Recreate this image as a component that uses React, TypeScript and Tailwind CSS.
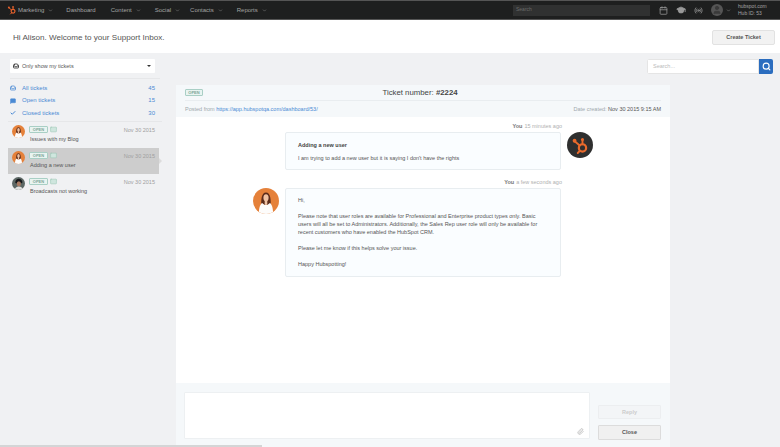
import { ChevronDown, Search, Inbox, MessageSquare, Check, Mail, GraduationCap, Radio, Calendar, Paperclip, User } from "lucide-react";

const FONT = "font-['Liberation_Sans',Arial,sans-serif]";
const NAV = [
  { label: "Dashboard", gap: "ml-[13px]" },
  { label: "Content", gap: "ml-[15px]" },
  { label: "Social", gap: "ml-[14px]" },
  { label: "Contacts", gap: "ml-[10px]" },
  { label: "Reports", gap: "ml-[14px]" },
];

function Sprocket({ size, color }: { size: number; color: string }) {
  return (
    <svg width={size} height={size} viewBox="0 0 24 24" fill="none" stroke={color}>
      <circle cx="14.5" cy="15" r="4.6" strokeWidth="2.8" />
      <path d="M14.5 10.5V5M11 12L5 7M11 19l-2.5 2.5" strokeWidth="2.4" strokeLinecap="round" />
      <circle cx="14.5" cy="4.5" r="1.9" fill={color} stroke="none" />
      <circle cx="4.5" cy="6" r="2.4" fill={color} stroke="none" />
    </svg>
  );
}

function Woman({ size }: { size: number }) {
  return (
    <svg width={size} height={size} viewBox="0 0 40 40" className="shrink-0 rounded-full">
      <rect width="40" height="40" fill="#e5813a" />
      <path d="M13 30c-1-12 0-23 7-23s8 11 7 23l-3-4H16z" fill="#5c2c1a" />
      <ellipse cx="20" cy="15" rx="4" ry="5.5" fill="#efc2a3" />
      <path d="M9 40c0-9 2-15 5-17l4 3h4l4-3c3 2 5 8 5 17z" fill="#fdfcfb" />
      <rect x="18" y="19" width="4" height="7" fill="#efc2a3" />
    </svg>
  );
}

function Man({ size }: { size: number }) {
  return (
    <svg width={size} height={size} viewBox="0 0 40 40" className="shrink-0 rounded-full">
      <rect width="40" height="40" fill="#5b6663" />
      <path d="M10 18c0-9 5-13 11-13s11 4 11 12l-4 3H13z" fill="#15181a" />
      <ellipse cx="21" cy="21" rx="6.5" ry="8" fill="#a87a62" />
      <path d="M8 40c1-7 6-11 13-11s12 4 13 11z" fill="#dfe0de" />
    </svg>
  );
}

function OpenBadge() {
  return (
    <span className="flex h-[7px] w-[19px] items-center justify-center rounded-[1px] border border-[#a9cfc5] bg-[#e9f4f1] text-[4px] font-bold text-[#7da598]">
      OPEN
    </span>
  );
}

function Ticket({ title, man, active }: { title: string; man?: boolean; active?: boolean }) {
  return (
    <div className={`relative flex h-[26px] w-[151px] gap-[4px] pl-[4px] pr-[4px] pt-[3px] ${active ? "bg-[#cdcdcd]" : ""}`}>
      {man ? <Man size={13} /> : <Woman size={13} />}
      <div className="min-w-0 flex-1 pt-[1px]">
        <div className="flex h-[8px] items-center gap-[2px]">
          <OpenBadge />
          <Mail size={7} fill="#cfe6de" className="text-[#9cc9b8]" />
          <span className="ml-auto text-[5.5px] text-[#a0a0a0]">Nov 30 2015</span>
        </div>
        <div className="mt-[2px] pl-[1px] text-[5.5px] leading-[7px] text-[#555]">{title}</div>
      </div>
      {active && <span className="absolute right-[-3px] top-[10px] h-0 w-0 border-y-[3px] border-l-[3px] border-y-transparent border-l-[#dcdcdc]" />}
    </div>
  );
}

function Filter({ icon, label, count }: { icon: React.ReactNode; label: string; count: number }) {
  return (
    <div className="flex h-[12.6px] items-center text-[6px] text-[#4a8ad4]">
      <span className="flex w-[10px] justify-start">{icon}</span>
      <span className="ml-[2px]">{label}</span>
      <span className="ml-auto">{count}</span>
    </div>
  );
}

export default function App() {
  return (
    <div className={`${FONT} relative flex h-[447px] w-[780px] flex-col overflow-hidden bg-[#f0f1f3]`}>
      {/* top nav */}
      <div className="flex h-[20px] shrink-0 items-center border-y border-y-[#555] bg-[#1e1f1f] pl-[7px] pr-[10px] text-[6px] text-[#a3a3a3]">
        <Sprocket size={10} color="#e8622c" />
        <span className="ml-[1px]">Marketing</span>
        <ChevronDown size={5} className="ml-[4px]" />
        {NAV.map((item) => (
          <span key={item.label} className={`${item.gap} flex items-center gap-[4px]`}>
            {item.label}
            {item.label !== "Dashboard" && <ChevronDown size={5} />}
          </span>
        ))}
        <div className="ml-auto flex h-[11px] w-[137px] items-center bg-[#303131] pl-[3px] text-[5px] text-[#6b6b6b]">Search</div>
        <Calendar size={9} className="ml-[9px] text-[#9a9a9a]" />
        <GraduationCap size={10} fill="currentColor" className="ml-[8px] text-[#9a9a9a]" />
        <Radio size={9} className="ml-[8px] text-[#9a9a9a]" />
        <span className="ml-[8px] flex h-[12px] w-[12px] items-center justify-center overflow-hidden rounded-full bg-[#555]">
          <User size={10} fill="currentColor" className="text-[#3a3a3a]" />
        </span>
        <ChevronDown size={5} className="ml-[3px]" />
        <div className="ml-[7px] w-[32px] text-[5px] leading-[7px]">
          <div>hubspot.com</div>
          <div>Hub ID: 53</div>
        </div>
      </div>

      {/* greeting */}
      <div className="flex h-[33px] shrink-0 items-center justify-between bg-white pl-[13px] pr-[5px]">
        <h1 className="pt-[3px] text-[8.1px] font-normal text-[#555]">Hi Alison. Welcome to your Support Inbox.</h1>
        <button className="mt-[2px] h-[15px] w-[63px] rounded-[2px] border border-[#e2e2e2] bg-[#f2f2f2] text-[5.5px] font-bold text-[#555]">
          Create Ticket
        </button>
      </div>

      <div className="flex min-h-0 flex-1 pl-[10px]">
        {/* sidebar */}
        <aside className="w-[166px] shrink-0 pt-[6px]">
          <div className="flex h-[14px] w-[145px] items-center rounded-[1px] bg-white pl-[3px] pr-[4px] text-[5.5px] text-[#555]">
            <Inbox size={6} strokeWidth={3} className="text-[#222]" />
            <span className="ml-[3px]">Only show my tickets</span>
            <span className="ml-auto h-0 w-0 border-x-[2px] border-t-[2.5px] border-x-transparent border-t-[#333]" />
          </div>
          <div className="mt-[5px] w-[150px] border-t border-[#e6e7e9] pr-[5px] pt-[3px]">
            <Filter icon={<Inbox size={6} strokeWidth={3} />} label="All tickets" count={45} />
            <Filter icon={<MessageSquare size={6} fill="currentColor" />} label="Open tickets" count={15} />
            <Filter icon={<Check size={6} strokeWidth={4} />} label="Closed tickets" count={30} />
          </div>
          <div className="-ml-[2px] mt-[1px] w-[154px] border-t border-[#e6e7e9]">
            <Ticket title="Issues with my Blog" />
            <Ticket title="Adding a new user" active />
            <Ticket title="Broadcasts not working" man />
          </div>
        </aside>

        {/* main column */}
        <div className="flex min-w-0 flex-1 flex-col pr-[7px]">
          <div className="flex h-[32px] shrink-0 justify-end pt-[6px]">
            <div className="flex h-[15px] w-[126px] overflow-hidden rounded-[2px]">
              <div className="flex-1 border border-[#e5e5e5] bg-white pl-[5px] text-[5.5px] leading-[13px] text-[#bbb]">Search...</div>
              <div className="flex w-[14px] items-center justify-center bg-[#2b6dbf]">
                <Search size={9} strokeWidth={3} className="text-white" />
              </div>
            </div>
          </div>

          <div className="mr-[103px] flex min-h-0 flex-1 flex-col bg-white">
            <div className="shrink-0 bg-[#f5f8fa] px-[9px]">
              <div className="relative flex h-[16px] items-center justify-center border-b border-[#e9edf0] pr-[6px]">
                <span className="absolute left-0 flex h-[7px] w-[18px] items-center justify-center rounded-[1px] border border-[#a9cfc5] bg-[#e9f4f1] text-[4px] font-bold text-[#7da598]">OPEN</span>
                <span className="text-[7.8px] text-[#444]">Ticket number: <b>#2224</b></span>
              </div>
              <div className="flex h-[16px] items-center justify-between text-[5.5px] text-[#a0a8ad]">
                <span>Posted from <span className="text-[#4a8ad4]">https://app.hubspotqa.com/dashboard/53/</span></span>
                <span>Date created: <span className="text-[#555]">Nov 30 2015 9:15 AM</span></span>
              </div>
            </div>

            <div className="min-h-0 flex-1 pl-[77px] pt-[5px]">
              <div className="w-[309px]">
                <div className="flex h-[8px] items-center justify-end text-[5.5px] text-[#b0b0b0]">
                  <b className="mr-[2px] font-bold text-[#777]">You</b> 15 minutes ago
                </div>
                <div className="relative mt-[2px] ml-[32px] h-[38px] w-[276px] rounded-[2px] border border-[#e8edf0] bg-[#fafdff] px-[12px] pt-[8px] text-[5.5px] text-[#555]">
                  <div className="font-bold text-[#444]">Adding a new user</div>
                  <div className="mt-[5px]">I am trying to add a new user but it is saying I don't have the rights</div>
                  <div className="absolute left-[281px] top-[-1px] flex h-[26px] w-[26px] items-center justify-center rounded-full bg-[#2f2f2f]">
                    <Sprocket size={19} color="#ea6a2c" />
                  </div>
                </div>
                <div className="mt-[8px] flex h-[8px] items-center justify-end text-[5.5px] text-[#b0b0b0]">
                  <b className="mr-[2px] font-bold text-[#777]">You</b> a few seconds ago
                </div>
                <div className="relative mt-[2px] ml-[32px] h-[89px] w-[276px] rounded-[2px] border border-[#e8edf0] bg-[#fafdff] px-[12px] pt-[7px] text-[5.5px] leading-[8px] text-[#555]">
                  <p>Hi,</p>
                  <p className="mt-[8px]">
                    Please note that user roles are available for Professional and Enterprise product types only. Basic users will all be set to Administrators. Additionally, the Sales Rep user role will only be available for recent customers who have enabled the HubSpot CRM.
                  </p>
                  <p className="mt-[8px]">Please let me know if this helps solve your issue.</p>
                  <p className="mt-[8px]">Happy Hubspotting!</p>
                  <div className="absolute left-[-33px] top-[-1px]">
                    <Woman size={26} />
                  </div>
                </div>
              </div>
            </div>

            {/* reply box */}
            <div className="flex h-[64px] shrink-0 gap-[8px] bg-[#f5f8fa] pl-[8px] pr-[8px] pt-[9px]">
              <div className="relative h-[47px] w-[406px] rounded-[1px] border border-[#edf0f2] bg-white">
                <Paperclip size={7} className="absolute bottom-[3px] right-[5px] text-[#aaa]" />
              </div>
              <div className="flex w-[63px] flex-col gap-[6px] pt-[13px]">
                <button className="h-[14px] rounded-[1px] border border-[#eceef0] bg-[#f3f5f7] text-[5.5px] font-bold text-[#ccc]">Reply</button>
                <button className="h-[15px] rounded-[1px] border border-[#dcdcdc] bg-[#f0f0f0] text-[5.5px] font-bold text-[#555]">Close</button>
              </div>
            </div>
          </div>
        </div>
      </div>

      {/* window scrollbar, lies over the page */}
      <div className="absolute bottom-0 left-0 h-[2px] w-[262px] bg-[#d4d5d6]" />
    </div>
  );
}
